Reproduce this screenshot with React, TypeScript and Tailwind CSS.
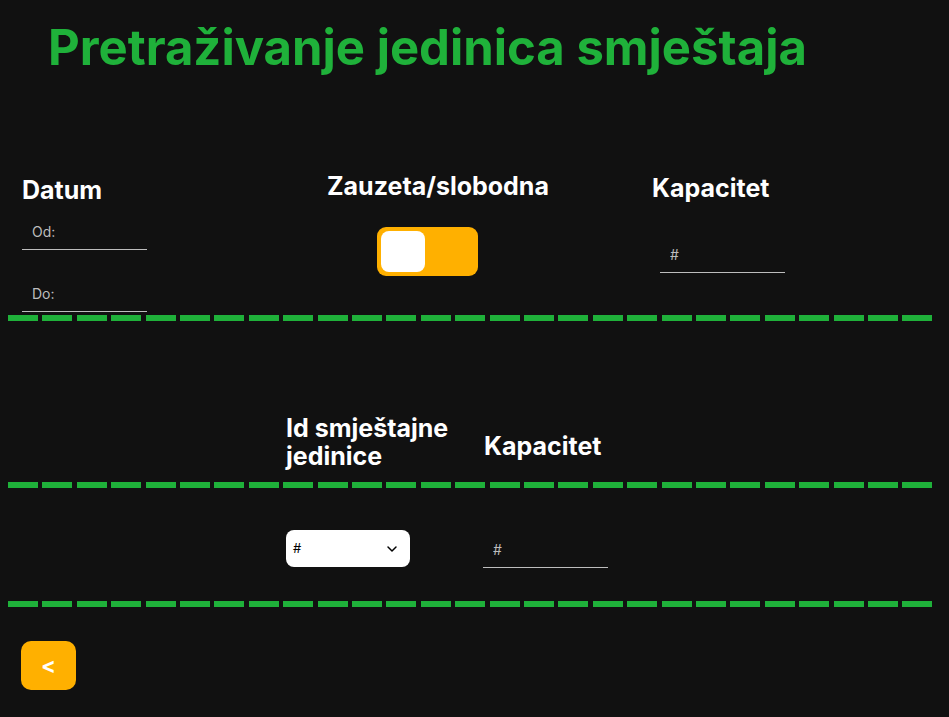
import React, { useState } from 'react';
import { ChevronDown } from 'lucide-react';

const font = { fontFamily: 'Inter, "Noto Sans", sans-serif' };

const Dashed: React.FC = () => (
  <div className="ml-[8px] h-[6px] w-[924px] bg-[repeating-linear-gradient(90deg,#1fb13a_0_30px,transparent_30px_34.4px)]" />
);

const LineInput: React.FC<{ placeholder: string; className?: string }> = ({ placeholder, className }) => (
  <input
    placeholder={placeholder}
    className={`block w-[125px] h-[30px] bg-transparent border-b border-[#bdbdbd] pl-[10px] pb-[6px] text-[14px] text-white placeholder:text-[#bdbdbd] outline-none ${className ?? ''}`}
  />
);

const App: React.FC = () => {
  const [busy, setBusy] = useState(false);

  return (
    <div className="min-h-screen w-full bg-[#111111] text-white" style={font}>
      <h1 className="pl-[48px] pt-[16px] text-[49px] font-bold leading-[64px] text-[#1fb13a]">
        Pretraživanje jedinica smještaja
      </h1>

      {/* Filters */}
      <div className="flex mt-[90px] pl-[22px] h-[145px]">
        <div className="w-[305px]">
          <h2 className="text-[25px] font-bold leading-[32px] mt-[4px]">Datum</h2>
          <LineInput placeholder="Od:" className="mt-[14px]" />
          <LineInput placeholder="Do:" className="mt-[32px]" />
        </div>
        <div className="w-[325px]">
          <h2 className="text-[25px] font-bold leading-[32px]">Zauzeta/slobodna</h2>
          <button
            onClick={() => setBusy(!busy)}
            className={`mt-[25px] ml-[50px] w-[101px] h-[49px] rounded-[9px] bg-[#ffb000] p-[4px] flex ${busy ? 'justify-end' : 'justify-start'}`}
          >
            <span className="block w-[44px] h-[41px] rounded-[8px] bg-white" />
          </button>
        </div>
        <div>
          <h2 className="text-[25px] font-bold leading-[32px] mt-[2px]">Kapacitet</h2>
          <LineInput placeholder="#" className="mt-[39px] ml-[8px]" />
        </div>
      </div>

      <Dashed />

      {/* Units table */}
      <div className="flex items-center mt-[88px] h-[73px]">
        <div className="w-[286px]" />
        <div className="w-[198px] text-[25px] font-bold leading-[28px] mb-[8px]">
          Id smještajne
          <br />
          jedinice
        </div>
        <div className="text-[25px] font-bold leading-[32px]">Kapacitet</div>
      </div>

      <Dashed />

      <div className="flex items-end h-[80px]">
        <div className="w-[286px]" />
        <div className="w-[198px] pb-[1px]">
          <div className="w-[124px] h-[37px] rounded-[8px] bg-white text-black flex items-center justify-between pl-[7px] pr-[10px]">
            <span className="text-[13px]">#</span>
            <ChevronDown size={16} strokeWidth={2.2} />
          </div>
        </div>
        <LineInput placeholder="#" className="-ml-[1px]" />
      </div>

      <div className="h-[33px]" />
      <Dashed />

      <button className="ml-[21px] mt-[34px] w-[55px] h-[49px] rounded-[10px] bg-[#ffb000] text-white text-[22px] font-bold flex items-center justify-center">
        &lt;
      </button>
    </div>
  );
};

export default App;
